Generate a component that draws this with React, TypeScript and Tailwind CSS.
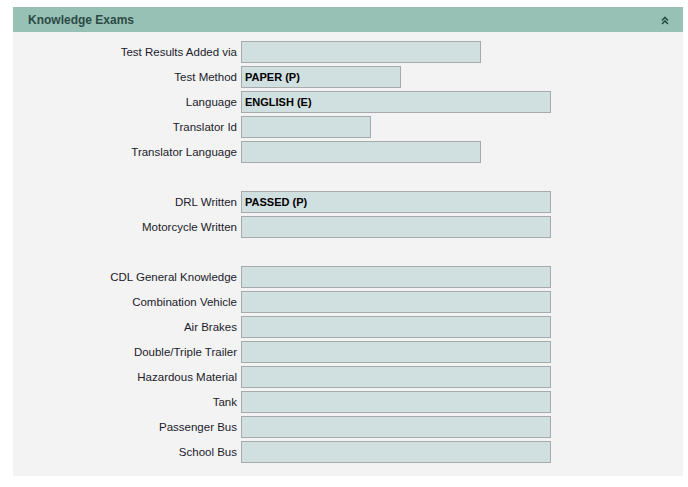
import React from "react";

type Row = { label: string; width: number; value?: string } | null;

const rows: Row[] = [
  { label: "Test Results Added via", width: 240 },
  { label: "Test Method", width: 160, value: "PAPER (P)" },
  { label: "Language", width: 310, value: "ENGLISH (E)" },
  { label: "Translator Id", width: 130 },
  { label: "Translator Language", width: 240 },
  null,
  { label: "DRL Written", width: 310, value: "PASSED (P)" },
  { label: "Motorcycle Written", width: 310 },
  null,
  { label: "CDL General Knowledge", width: 310 },
  { label: "Combination Vehicle", width: 310 },
  { label: "Air Brakes", width: 310 },
  { label: "Double/Triple Trailer", width: 310 },
  { label: "Hazardous Material", width: 310 },
  { label: "Tank", width: 310 },
  { label: "Passenger Bus", width: 310 },
  { label: "School Bus", width: 310 },
];

export default function App() {
  return (
    <div
      className="w-[688px] h-[487px] bg-white pt-[7px] pl-[13px]"
      style={{ fontFamily: '"Liberation Sans", Arial, sans-serif' }}
    >
      <div className="w-[670px]">
        <div className="h-[25px] bg-[#98c1b5] flex items-center justify-between pl-[15px] pr-[14px]">
          <span className="text-[12px] font-bold text-[#2c4a45]">Knowledge Exams</span>
          <svg width="8" height="9" viewBox="0 0 8 9" className="mt-[1px]">
            <path d="M1 4.5 L4 1.5 L7 4.5 M1 8 L4 5 L7 8" fill="none" stroke="#244e46" strokeWidth="1.6" />
          </svg>
        </div>
        <div className="bg-[#f3f3f3] h-[444px] pt-[9px]">
          {rows.map((r, i) =>
            r === null ? (
              <div key={i} className="h-[25px]" />
            ) : (
              <div key={i} className="h-[25px] flex">
                <div className="w-[228px] text-right pr-[4px] text-[11.5px] leading-[22px] text-[#1b1b2b]">
                  {r.label}
                </div>
                <div
                  className="h-[22px] border border-[#a6aaab] bg-[#d0dfdf] text-[11px] font-bold text-black leading-[20px] pl-[3px]"
                  style={{ width: r.width }}
                >
                  {r.value ?? ""}
                </div>
              </div>
            )
          )}
        </div>
      </div>
    </div>
  );
}
